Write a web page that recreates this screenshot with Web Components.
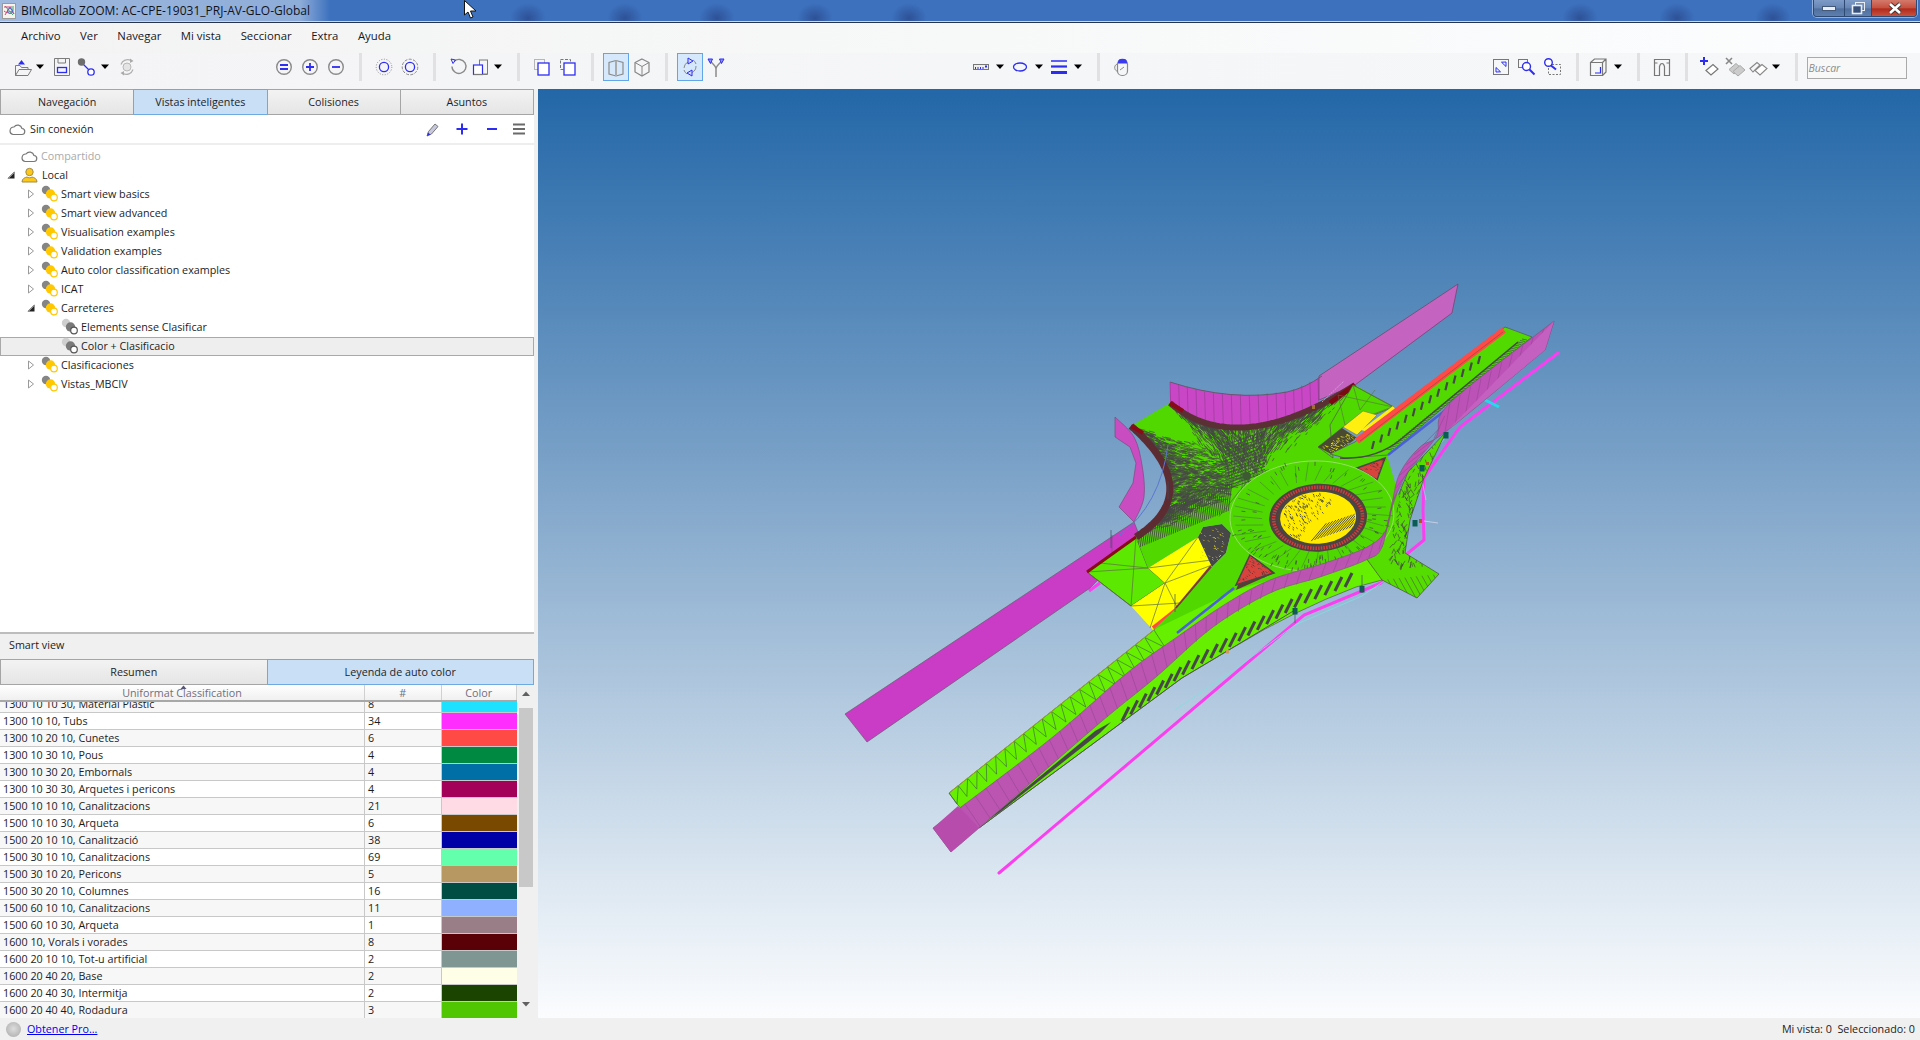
<!DOCTYPE html>
<html lang="es"><head><meta charset="utf-8"><title>BIMcollab ZOOM</title>
<style>
html,body{margin:0;padding:0;height:100%;overflow:hidden;background:#f0f0f0}
body{font:10.75px/1.2 "Open Sans","Liberation Sans",sans-serif;color:#1c1c1c}
</style></head>
<body>
<bim-app>
  <bim-title slot="title">BIMcollab ZOOM: AC-CPE-19031_PRJ-AV-GLO-Global</bim-title>
  <bim-menu slot="menu"><span>Archivo</span><span>Ver</span><span>Navegar</span><span>Mi vista</span><span>Seccionar</span><span>Extra</span><span>Ayuda</span></bim-menu>
  <bim-toolbar slot="toolbar"></bim-toolbar>
  <bim-panel slot="panel">
    <bim-tabs slot="tabs" style="height:26px"><bim-tab>Navegación</bim-tab><bim-tab active>Vistas inteligentes</bim-tab><bim-tab>Colisiones</bim-tab><bim-tab>Asuntos</bim-tab></bim-tabs>
    <bim-conn slot="conn">Sin conexión</bim-conn>
    <bim-tree slot="tree">
      <tree-item level="0" kind="cloud" muted>Compartido</tree-item>
      <tree-item level="0" kind="person" state="open">Local</tree-item>
      <tree-item level="1" kind="group" state="closed">Smart view basics</tree-item>
      <tree-item level="1" kind="group" state="closed">Smart view advanced</tree-item>
      <tree-item level="1" kind="group" state="closed">Visualisation examples</tree-item>
      <tree-item level="1" kind="group" state="closed">Validation examples</tree-item>
      <tree-item level="1" kind="group" state="closed">Auto color classification examples</tree-item>
      <tree-item level="1" kind="group" state="closed">ICAT</tree-item>
      <tree-item level="1" kind="group" state="open">Carreteres</tree-item>
      <tree-item level="2" kind="view">Elements sense Clasificar</tree-item>
      <tree-item level="2" kind="view" selected>Color + Clasificacio</tree-item>
      <tree-item level="1" kind="group" state="closed">Clasificaciones</tree-item>
      <tree-item level="1" kind="group" state="closed">Vistas_MBCIV</tree-item>
    </bim-tree>
    <bim-heading slot="heading">Smart view</bim-heading>
    <bim-tabs slot="subtabs" style="height:26px"><bim-tab>Resumen</bim-tab><bim-tab active>Leyenda de auto color</bim-tab></bim-tabs>
    <bim-legend slot="legend"></bim-legend>
  </bim-panel>
  <bim-model slot="model"></bim-model>
  <bim-status slot="status"></bim-status>
</bim-app>
<script>
const def=(name,css,html)=>{customElements.define(name,class extends HTMLElement{
  constructor(){super();const r=this.attachShadow({mode:'open'});r.innerHTML=`<style>${css}</style>${typeof html==='function'?html(this):html}`;}
});};
const B='#2d2df2',G='#7b7b7b';
const svg=(w,h,b)=>`<svg width="${w}" height="${h}" viewBox="0 0 ${w} ${h}" fill="none" style="display:block;overflow:visible">${b}</svg>`;

def('bim-app',`:host{display:grid;grid-template-columns:534px 4px 1fr;grid-template-rows:23px 30px 36px 1fr 22px;height:1040px;width:1920px;background:#f0f0f0}
.t{grid-column:1/4}.p{grid-column:1;grid-row:4;min-height:0}.m{grid-column:3;grid-row:4;min-height:0;display:grid}.s{grid-column:1/4}`,
`<div class="t"><slot name="title"></slot></div><div class="t"><slot name="menu"></slot></div><div class="t"><slot name="toolbar"></slot></div>
<div class="p"><slot name="panel"></slot></div><div class="m"><slot name="model"></slot></div><div class="s"><slot name="status"></slot></div>`);

const blobs=[528,625,717,815,909,1580,1677,1773].map(x=>`radial-gradient(ellipse 18px 15px at ${x}px 18px,rgba(35,60,125,.6),rgba(35,60,125,0))`).join(',');
def('bim-title',`:host{display:block;height:23px;box-sizing:border-box;position:relative;border-bottom:1px solid #26344e;
background:${blobs},linear-gradient(90deg,rgba(255,255,255,.5) 0,rgba(255,255,255,.42) 300px,rgba(255,255,255,0) 330px),linear-gradient(#3d71bd,#3d71bf)}
:host::after{content:"";position:absolute;left:0;right:0;bottom:0;height:1px;background:#c9d8ec}
.row{display:flex;align-items:center;height:22px;padding-left:2px;gap:5px;font-size:12px;color:#10131a}
.ctl{position:absolute;right:3px;top:0;width:104px;height:17px;display:grid;grid-template-columns:30px 27px 47px;border:1px solid #2e4a73;border-top:0;border-radius:0 0 4px 4px;box-sizing:border-box;overflow:hidden;box-shadow:0 0 0 1px rgba(255,255,255,.45)}
.ctl div{display:flex;align-items:center;justify-content:center;background:linear-gradient(#7e9bc7 0,#6785b4 50%,#4f6f9f 55%,#5f7fae)}
.ctl div+div{border-left:1px solid #2e4a73}
.ctl .x{background:linear-gradient(#d47a6b 0,#c64f3e 50%,#b02a1c 55%,#c9523f)}
.cur{position:absolute;left:464px;top:0}`,
`<div class="row">${svg(14,16,`<rect x=".5" y=".5" width="13" height="15" fill="#f6f2ec" stroke="#9a9a9a"/><path d="M2 4h8M3 12l5-8 4 7M2 8c4 4 7-3 10 3" stroke="#d4437a"/><path d="M3 3l8 9M11 3v6" stroke="#39a36b"/><circle cx="8" cy="8" r="2.5" stroke="#3f6fd0"/>`)}<span><slot></slot></span></div>
<div class="ctl"><div>${svg(14,5,`<rect x=".5" y=".5" width="13" height="4" fill="#e8edf4" stroke="#44587a"/>`)}</div><div>${svg(13,12,`<rect x="3.5" y=".5" width="9" height="8" fill="none" stroke="#e8edf4"/><rect x=".5" y="3.5" width="9" height="8" fill="#38517a" stroke="#e8edf4" stroke-width="1.6"/>`)}</div><div class="x">${svg(14,11,`<path d="M2 1l10 9M12 1L2 10" stroke="#3b3b3b" stroke-width="4.4"/><path d="M2 1l10 9M12 1L2 10" stroke="#fff" stroke-width="2.6"/>`)}</div></div>
<div class="cur">${svg(13,19,`<path d="M.5 .5V15L4 12l2.5 6 2.5-1-2.5-6H12Z" fill="#fff" stroke="#111"/>`)}</div>`);

def('bim-menu',`:host{display:flex;gap:19.5px;align-items:center;height:30px;padding:0 0 4px 21px;box-sizing:border-box;background:linear-gradient(90deg,#f3f3f3,#f7f8f8 50%,#fcfdfe);font-size:11.35px}
::slotted(span){color:#17171c}`,`<slot></slot>`);

const dd=`<path d="M2 9.5h8L6 14Z" fill="#000"/>`;
const ICONS={
open:`<path d="M10.5 5l3.5 4.5H7Z" fill="${B}"/><path d="M4.5 20.5V10.5H9l1.5 2h6.5v2M4.5 20.5L8 14.5h12.5l-3.5 6Z" stroke="${G}"/>`,
save:`<path d="M4.5 3.5h15v17h-15Z" stroke="${G}"/><path d="M8 3.5V8h7.5V3.5" stroke="${G}"/><rect x="7.5" y="12.5" width="9" height="5" stroke="${B}" stroke-width="1.3"/>`,
conn:`<path d="M8 8l9 9" stroke="${B}" stroke-width="1.3"/><circle cx="7.5" cy="7" r="3.7" fill="#6d6d6d"/><circle cx="17" cy="17" r="3.2" fill="#fff" stroke="${B}" stroke-width="1.3"/>`,
sync:`<circle cx="12" cy="12" r="4" fill="#e4e4e4" stroke="#b8b8b8"/><path d="M6 9.5a7 7 0 0 1 10-4M18 14.500a7 7 0 0 1-10 4" stroke="#b0b0b0" stroke-width="1.2"/><path d="M15 3.500l3.500 2.500-3.500 2ZM9 20.500l-3.500-2.500 3.500-2Z" fill="#aaa"/>`,
eq:`<circle cx="12" cy="12" r="7.3" stroke="#8a8a8a" stroke-width="1.4"/><path d="M8 10h8M8 14h8" stroke="${B}" stroke-width="1.8"/>`,
plus:`<circle cx="12" cy="12" r="7.3" stroke="#8a8a8a" stroke-width="1.4"/><path d="M8 12h8M12 8v8" stroke="${B}" stroke-width="1.8"/>`,
minus:`<circle cx="12" cy="12" r="7.3" stroke="#8a8a8a" stroke-width="1.4"/><path d="M8 12h8" stroke="${B}" stroke-width="1.8"/>`,
d1:`<circle cx="12" cy="12" r="7.8" stroke="#888" stroke-dasharray="1 1.6"/><circle cx="12" cy="12" r="4.6" stroke="${B}" stroke-width="1.3"/>`,
d2:`<circle cx="12" cy="12" r="7.8" stroke="#888" stroke-dasharray="3 1.4"/><circle cx="12" cy="12" r="4.6" stroke="${B}" stroke-width="1.3"/>`,
undo:`<path d="M8 6.500a7 7 0 1 1-2 5" stroke="#8a8a8a" stroke-width="1.4"/><path d="M5 4l4.500 1-2.500 3.500Z" fill="none" stroke="${B}"/>`,
boxes:`<rect x="10.500" y="5" width="8" height="14" stroke="${G}"/><rect x="4.500" y="10" width="9" height="9.500" fill="#fff" stroke="${B}" stroke-width="1.2"/><path d="M4.500 19.500h14" stroke="${G}"/>`,
sel1:`<rect x="4.500" y="4.500" width="10" height="10" stroke="#777" stroke-dasharray="1 1"/><rect x="8" y="8" width="11" height="12" fill="#fff" stroke="${B}" stroke-width="1.3"/>`,
sel2:`<rect x="4.500" y="4.500" width="10" height="10" stroke="#777" stroke-dasharray="3 1.500"/><rect x="8" y="8" width="11" height="12" fill="#fff" stroke="${B}" stroke-width="1.3"/>`,
book:`<path d="M12 5.500L5 7.500v11.500l7 2 7-2V7.500Z" stroke="#8a8a8a" stroke-width="1.200"/><path d="M12 5.500v15.500" stroke="#aaa" stroke-width="2"/>`,
cube:`<path d="M12 4l7 3.500v9.500l-7 4-7-4V7.500Z" stroke="#858585" stroke-width="1.200"/><path d="M5 7.500l7 4 7-4M12 11.500V21" stroke="#858585"/>`,
orbit:`<path d="M6 13a7 7 0 0 1 4-6M18 11a7 7 0 0 1-4 6.500M6 15a7 7 0 0 0 3 4M15 5a7 7 0 0 1 3 4" stroke="#8a8a8a"/><path d="M10 3l5 3-5 3Z" fill="#cfd8ff" stroke="${B}"/><path d="M14 15l-5 3 5 3Z" fill="#cfd8ff" stroke="${B}"/>`,
walk:`<path d="M12 22V14c0-3-3-5-6-8M12 14c0-3 3-5 6-8" stroke="#8a8a8a" stroke-width="1.500"/><path d="M4 4h4.500l-2 4.500ZM20 4h-4.500l2 4.500Z" fill="#8f8fff" stroke="${B}"/>`,
ruler:`<rect x="4.500" y="9.500" width="15" height="5" fill="#eee" stroke="#777"/><path d="M6.500 14v-2M9 14v-2M11.500 14v-2M14 14v-2" stroke="${B}"/><rect x="16" y="10.500" width="2" height="2" fill="${B}"/>`,
ell:`<ellipse cx="12" cy="12" rx="6.500" ry="4" stroke="${B}" stroke-width="1.300"/>`,
lines:`<path d="M4 6h16" stroke="${B}" stroke-width="1.500"/><path d="M4 11.500h16" stroke="${B}" stroke-width="2.200"/><path d="M4 17.500h16" stroke="${B}" stroke-width="3"/>`,
mouse:`<rect x="7.500" y="4.500" width="10" height="16" rx="4.500" stroke="#8a8a8a" stroke-width="1.200"/><path d="M8 8.500V7a4 3 0 0 1 9 0v1.500Z" fill="#3a3af0"/><path d="M7 9c-4 2-2 7 0 7M10 15l4-3" stroke="#8a8a8a"/>`,
fit:`<rect x="4.500" y="4.500" width="15" height="15" stroke="#777"/><path d="M7 17l4.500-.2L7 12.500ZM17 7l-4.500 .2L17 11.500Z" stroke="${B}"/>`,
zw:`<rect x="3.500" y="4.500" width="9" height="8" stroke="#777"/><circle cx="11.500" cy="11.500" r="4" fill="#fff" stroke="${B}" stroke-width="1.400"/><path d="M14.500 14.500l5 5" stroke="${B}" stroke-width="2"/>`,
zs:`<rect x="8.500" y="9.500" width="12" height="10" stroke="#777" stroke-dasharray="2 1.500"/><circle cx="8.500" cy="7.500" r="3.800" fill="#fff" stroke="${B}" stroke-width="1.400"/><path d="M11 10.500l5 4" stroke="${B}" stroke-width="2"/>`,
cam:`<path d="M4.500 7.500h12v13h-12ZM4.500 7.500l4-3.500h11.500v13l-3.500 3.500M16.500 7.500l3.500-3.500" stroke="#777" stroke-width="1.200"/><path d="M9 18h5.500v-6" stroke="${B}" stroke-width="1.200"/>`,
sec:`<path d="M4.500 4.500h15v16h-5v-9c-1-4-4-4-5 0v9h-5Z" stroke="#777" stroke-width="1.200"/><path d="M4.500 8h3M19.500 8h-3" stroke="#777"/>`,
tagp:`<path d="M2 6h8M6 2v8" stroke="${B}" stroke-width="2"/><path d="M8 15.500l7-6 5 4.500-7 6Z" fill="#fff" stroke="#777" stroke-width="1.200"/>`,
tagx:`<path d="M2 3l6 6M8 3L2 9" stroke="#888" stroke-width="1.600"/><path d="M5 14.500l7-6 5 4.500-7 6Z" fill="#ccc" stroke="#aaa"/><path d="M9 16.500l7-6 5 4.500-7 6Z" fill="#ccc" stroke="#aaa"/>`,
tags:`<path d="M3 13.500l7-6 3 2.500-7 7Z" stroke="#888" stroke-width="1.100"/><path d="M8 15.500l7-6 5 4-7 6.500Z" fill="#fff" stroke="#888" stroke-width="1.100"/>`};
const TOOLS=[['open',23],['dd',40,12],['save',62],['conn',86],['dd',105,12],['sync',127],['eq',284],['plus',310],['minus',336],['sep',360],['d1',384],['d2',410],['sep',434],['undo',458],['boxes',481],['dd',498,12],['sep',518],['sel1',542],['sel2',568],['sep',592],['book',616,26,1],['cube',642],['sep',666],['orbit',690,26,1],['walk',716],['ruler',981],['dd',1000,12],['ell',1020],['dd',1039,12],['lines',1059],['dd',1078,12],['sep',1098],['mouse',1122],['fit',1501],['zw',1527],['zs',1552],['sep',1577],['cam',1598],['dd',1618,12],['sep',1638],['sec',1662],['sep',1686],['tagp',1710],['tagx',1736],['tags',1759],['dd',1776,12],['sep',1796]];
def('bim-toolbar',`:host{display:flex;align-items:flex-start;height:36px;box-sizing:border-box;background:linear-gradient(90deg,#f4f4f6,#f5f6f8 50%,#f6f7f9)}
.i{flex:none;height:28px;display:flex;align-items:center;justify-content:center;box-sizing:border-box}
.on{background:#d6e8fb;border:1px solid #62a5e8}
.sep{width:3px;background:#e1e1e3}
.q{flex:none;margin-left:9px;margin-top:4px;width:100px;height:22px;box-sizing:border-box;border:1px solid #aaa;background:#f8f8f8;font:italic 10.5px/20px "Open Sans",sans-serif;color:#8c8c8c;padding-left:1px}`,
t=>{let end=0,h='';for(const[k,c,w0,on]of TOOLS){const w=k==='sep'?3:(w0||24);const ml=c-w/2-end;end=c+w/2;
 if(k==='sep')h+=`<div class="i sep" style="margin-left:${ml}px"></div>`;
 else if(k==='dd')h+=`<div class="i" style="margin-left:${ml}px;width:12px">${svg(12,24,dd)}</div>`;
 else h+=`<div class="i${on?' on':''}" style="margin-left:${ml}px;width:${w}px">${svg(24,24,ICONS[k])}</div>`;}
 return h+`<div class="q">Buscar</div>`;});

def('bim-panel',`:host{display:flex;flex-direction:column;height:100%;background:#fff;overflow:hidden}
.tree{flex:1;min-height:0;display:block;border-bottom:2px solid #bdbdbd}`,
`<slot name="tabs"></slot><slot name="conn"></slot><div class="tree"><slot name="tree"></slot></div><slot name="heading"></slot><slot name="subtabs"></slot><slot name="legend"></slot>`);

def('bim-tabs',`:host{display:flex;box-sizing:border-box}`,`<slot></slot>`);
def('bim-tab',`:host{flex:1 1 0;display:flex;align-items:center;justify-content:center;box-sizing:border-box;border:1px solid #a5a5a5;margin-left:-1px;background:linear-gradient(#f3f3f3,#e5e5e5);color:#1e1e28}
:host(:first-child){margin-left:0}
:host([active]){background:#c8dff6;border-color:#6fa9e2;z-index:1;position:relative}`,`<slot></slot>`);

def('bim-conn',`:host{display:flex;align-items:center;height:30px;box-sizing:border-box;border-bottom:2px solid #eee;padding-left:9px;background:#fff}
.t{margin-left:5px;flex:1}
.a{display:flex;align-items:center;margin-right:9.5px}.a>*{margin-left:6px}.a>:last-child{margin-left:7.5px}`,
`${svg(16,12,`<path d="M4 11.500h8.500a3 3 0 0 0 .5-6 4.500 4.500 0 0 0-8-1.500 3.800 3.800 0 0 0-1 7.500Z" stroke="#777" stroke-width="1.200"/>`)}<span class="t"><slot></slot></span>
<span class="a">${svg(24,18,`<path d="M7 16l1.500-4.500 6.500-7.500 3 2.500-6.500 7.500Z" fill="#c8c8dc" stroke="#777"/><path d="M7 16l1-3.500 2.500 2Z" fill="${B}"/>`)}${svg(24,18,`<path d="M12 3.500v11M6.500 9h11" stroke="${B}" stroke-width="2"/>`)}${svg(24,18,`<path d="M7 9h10" stroke="${B}" stroke-width="2"/>`)}${svg(13,18,`<path d="M1 4.500h12M1 9h12M1 13.500h12" stroke="#6a6a6a" stroke-width="2"/>`)}</span>`);

def('bim-tree',`:host{display:block;padding-top:2px}`,`<slot></slot>`);
const balls=(a,b,cs)=>`<circle cx="5" cy="5" r="4.200" fill="${a}"/><circle cx="9.500" cy="9" r="4.700" fill="${b}"/><circle cx="13" cy="12.500" r="3.300" fill="#fff" stroke="${cs}" stroke-width="1.200"/>`;
const KINDS={cloud:svg(16,12,`<path d="M4 11.500h8.500a3 3 0 0 0 .5-6 4.500 4.500 0 0 0-8-1.500 3.800 3.800 0 0 0-1 7.500Z" stroke="#777" stroke-width="1.200"/>`),
person:svg(17,16,`<circle cx="8.500" cy="5" r="3.700" fill="#fdc818" stroke="#a38b45"/><path d="M1 15c0-3.500 3-4.500 5-5 1 1 4 1 5 0 2 .5 5 1.500 5 5Z" fill="#fdc818" stroke="#a38b45"/>`),
group:svg(17,17,balls('#858585','#ffc800','#ffc800')),view:svg(17,17,balls('#cfcfcf','#7a7a7a','#555'))};
def('tree-item',`:host{display:flex;align-items:center;height:19px;box-sizing:border-box;position:relative;color:#1c1c24}
:host([selected]){background:#eee;box-shadow:inset 0 0 0 1px #a9a9a9}
:host([muted]){color:#aaa}
.ar{position:absolute;top:4px;width:10px;height:10px}
.ic{position:absolute;top:0}
.tx{position:absolute;top:0;height:19px;display:flex;align-items:center;white-space:nowrap}`,
t=>{const l=+t.getAttribute('level'),k=t.getAttribute('kind'),s=t.getAttribute('state');const ax=[6,26,0][l],ix=[21,41,61][l],tx=[42,61,81][l]-(k==='cloud'?1:0);
 const ar=s==='open'?`<path d="M8.500 1.500v7H1.500Z" fill="#222"/><path d="M8 3l-5 5" stroke="#888"/>`:s==='closed'?`<path d="M2.500 1l5 4-5 4Z" fill="#fff" stroke="#9a9a9a"/>`:'';
 return `${ar?`<span class="ar" style="left:${ax}px">${svg(10,10,ar)}</span>`:''}<span class="ic" style="left:${ix}px;top:${k==='cloud'?3:k==='person'?1:0}px">${KINDS[k]}</span><span class="tx" style="left:${tx}px"><slot></slot></span>`;});

def('bim-heading',`:host{display:flex;align-items:center;height:25px;box-sizing:border-box;padding:0 0 2px 9px;background:#f0f0f0;color:#1c1c1c}`,`<slot></slot>`);

const DATA=[['1300 10 10 30, Material Plastic',8,'#1de1ff'],['1300 10 10, Tubs',34,'#ff2eff'],['1300 10 20 10, Cunetes',6,'#ff4a46'],['1300 10 30 10, Pous',4,'#008941'],['1300 10 30 20, Embornals',4,'#006fa6'],['1300 10 30 30, Arquetes i pericons',4,'#a30059'],['1500 10 10 10, Canalitzacions',21,'#ffdbe5'],['1500 10 10 30, Arqueta',6,'#7a4900'],['1500 20 10 10, Canalització',38,'#0000a6'],['1500 30 10 10, Canalitzacions',69,'#63ffac'],['1500 30 10 20, Pericons',5,'#b79762'],['1500 30 20 10, Columnes',16,'#004d43'],['1500 60 10 10, Canalitzacions',11,'#8fb0ff'],['1500 60 10 30, Arqueta',1,'#997d87'],['1600 10, Vorals i vorades',8,'#5a0007'],['1600 20 10 10, Tot-u artificial',2,'#809693'],['1600 20 40 20, Base',2,'#feffe6'],['1600 20 40 30, Intermitja',2,'#1b4400'],['1600 20 40 40, Rodadura',3,'#4fc601']];
def('bim-legend',`:host{flex:none;display:grid;grid-template-columns:517px 17px;grid-template-rows:17px 316px;background:#f0f0f0;color:#1c1c1c}
.h,.r{display:grid;grid-template-columns:365px 76.500px 75.500px;box-sizing:border-box}
.h{height:17px;background:linear-gradient(#fff,#f0f0f0);border-bottom:2px solid #a8a8a8;color:#6f6f80;position:relative}
.h div{display:flex;align-items:center;justify-content:center;border-right:1px solid #d0d0d0;line-height:14px}
.sort{position:absolute;left:180px;top:0}
.b{overflow:hidden;height:316px;background:#fff;padding-left:1px;box-sizing:border-box;width:517px}
.in{margin-top:-6px}
.r{height:17px;margin-left:-1px;border-bottom:1px solid #c8c8c8;background:#fff}
.r:nth-child(odd){background:#f7f7f7}
.r div{display:flex;align-items:center;border-right:1px solid #c8c8c8;padding-left:3px;white-space:nowrap}
.r div:last-child{border-right:0;padding:0}
.sb{grid-row:1/3;grid-column:2;display:grid;grid-template-rows:23px 179px 1fr 16px;justify-items:center;background:#f0f0f0}
.th{width:14px;background:#c8c8c8}`,
`<div class="h"><div>Uniformat Classification</div><div>#</div><div>Color</div><span class="sort">${svg(7,4,`<path d="M.5 4L3.500 .5 6.500 4Z" fill="#557"/>`)}</span></div>
<div class="sb"><div style="padding-top:6px">${svg(8,5,`<path d="M0 5l4-4.500L8 5Z" fill="#606060"/>`)}</div><div class="th"></div><div></div><div>${svg(8,5,`<path d="M0 0l4 4.500L8 0Z" fill="#606060"/>`)}</div></div>
<div class="b"><div class="in">${DATA.map(d=>`<div class="r"><div>${d[0]}</div><div>${d[1]}</div><div style="background:${d[2]}"></div></div>`).join('')}</div></div>`);

def('bim-status',`:host{display:flex;align-items:center;height:22px;background:#f0f0f0;padding-left:6px;padding-right:5px;color:#1c1c1c}
.ball{width:15px;height:15px;border-radius:50%;background:radial-gradient(circle at 50% 45%,#ddd,#a8a8a8)}
a{margin-left:6px;color:#0000ee;text-decoration:underline}
.r{margin-left:auto;white-space:pre}`,
`<span class="ball"></span><a>Obtener Pro...</a><span class="r">Mi vista: 0  Seleccionado: 0</span>`);

/* ---------- model ---------- */
function buildModel(){
 let seed=7;const R=()=>{seed=(seed*16807)%2147483647;return seed/2147483647;};
 const smooth=pts=>{let d=`M${pts[0]}`;for(let i=0;i<pts.length-1;i++){const p0=pts[i-1]||pts[i],p1=pts[i],p2=pts[i+1],p3=pts[i+2]||p2;
   d+=`C${(p1[0]+(p2[0]-p0[0])/6).toFixed(1)} ${(p1[1]+(p2[1]-p0[1])/6).toFixed(1)} ${(p2[0]-(p3[0]-p1[0])/6).toFixed(1)} ${(p2[1]-(p3[1]-p1[1])/6).toFixed(1)} ${p2}`;}return d;};
 const sample=(pts,n)=>{const seg=[];let L=0;for(let i=0;i<pts.length-1;i++){const l=Math.hypot(pts[i+1][0]-pts[i][0],pts[i+1][1]-pts[i][1]);seg.push(l);L+=l;}
   const o=[];for(let k=0;k<=n;k++){let d=L*k/n,i=0;while(i<seg.length-1&&d>seg[i]){d-=seg[i];i++;}const t=d/seg[i];o.push([pts[i][0]+(pts[i+1][0]-pts[i][0])*t,pts[i][1]+(pts[i+1][1]-pts[i][1])*t]);}return o;};
 const lines=(arr,col,w,op)=>`<path d="${arr.map(l=>`M${l[0].toFixed(1)} ${l[1].toFixed(1)}L${l[2].toFixed(1)} ${l[3].toFixed(1)}`).join('')}" stroke="${col}" stroke-width="${w}" ${op?`opacity="${op}"`:''} fill="none"/>`;
 const Qp=(a,c,b,n)=>{const o=[];for(let i=0;i<=n;i++){const t=i/n;o.push([(1-t)*(1-t)*a[0]+2*t*(1-t)*c[0]+t*t*b[0],(1-t)*(1-t)*a[1]+2*t*(1-t)*c[1]+t*t*b[1]]);}return o;};
 const DK='#474747';
 let s='';
 const wU=[[933,828],[1049,740],[1127,673],[1177,637],[1227,603],[1270,580],[1325,563],[1367,547],[1386,530],[1394,500],[1408,472],[1436,437],[1450,403],[1554,321]];
 const wL=[[951,852],[979,828],[1095,727],[1156,677],[1213,627],[1270,593],[1320,577],[1366,560],[1382,547],[1392,503],[1400,473],[1420,447],[1448,430],[1545,350]];
 const leftArc=Qp([1136,537],[1206,492],[1131,426],90), topArc=Qp([1170,403],[1237,460],[1355,385],110);
 /* background lines */
 s+=`<polyline points="999,873 1304,615 1381,583 1408,553" stroke="#fb3ff0" stroke-width="3" stroke-linecap="round" fill="none"/>`;
 s+=`<polyline points="1558,353 1460,427 1424,478 1423,510 1424,540 1408,553" stroke="#fb3ff0" stroke-width="3" stroke-linecap="round" fill="none"/>`;
 s+=`<line x1="1089" y1="591" x2="1100" y2="583" stroke="#fb3ff0" stroke-width="3"/>`;
 s+=`<line x1="1483" y1="399" x2="1499" y2="407" stroke="#25d8ee" stroke-width="3"/>`;
 s+=`<path d="M1175 710L1234 670 1295 625 1362 596 1408 565M1426 500L1420 470 1448 434" stroke="#7fe0e0" stroke-width=".8" fill="none"/>`;
 /* top wall */
 s+=`<path d="M1170 382 Q1232 402 1287 392 Q1305 388 1322 376 L1458 284 L1452 313 L1355 385 L1319 400 Q1300 425 1250 427 Q1200 425 1170 403Z" fill="#c946c6"/>`;
 s+=`<path d="M1319 376L1458 284 1452 313 1355 385 1319 400Z" fill="#c563c1" stroke="#6c4a70" stroke-width=".8"/>`;
 s+=`<path d="M1170 382Q1232 402 1287 392Q1305 388 1322 376" stroke="#555" stroke-width=".8" fill="none"/>`;
 s+=lines(sample([[1170,382],[1210,393],[1250,395],[1290,391],[1318,378]],17).map(p=>[p[0],p[1],p[0]+1,p[1]+35]),'#8d3d8d',.6);
 /* left fragment */
 s+=`<path d="${smooth([[1115,417],[1134,437],[1142,465],[1144,497],[1134,522]])}L1119 507L1133 483L1136 463L1130 447L1115 437Z" fill="#c94cc1" stroke="#7d4a80" stroke-width=".7"/>`;
 /* long left wall */
 s+=`<polygon points="845,714 1134,522 1140,537 1090,588 867,742" fill="#cb3cc6" stroke="#5f5f6a" stroke-width=".7"/>`;
 s+=`<line x1="1112" y1="535" x2="1112" y2="566" stroke="#8b3a90" stroke-width=".7"/>`;
 s+=`<defs><clipPath id="plz"><path d="M1131 426L1170 403Q1237 460 1355 385L1394 407L1343 427L1318 447L1333 458L1387 455L1400 500L1382 547L1320 577L1270 580L1236 590L1153 630L1177 608L1212 567L1226 553L1231 533L1222 524L1203 527L1198 537L1148 568L1136 537Q1206 492 1131 426Z"/></clipPath>
 <clipPath id="est"><path d="M1392 510L1408 472L1446 432L1424 478L1410 520L1405 553L1439 574L1417 598L1382 580L1366 558L1382 547Z"/></clipPath></defs>`;
 /* SW road */
 s+=`<path d="M949 793L1154 630L1177 608L1260 580L1370 540L1382 580L1356 587Q1295 610 1234 647L1182 678L979 828L957 804Z" fill="#66f000" stroke="#555" stroke-width=".7"/>`;
 const a=sample([[949,793],[1154,630]],22),b=sample([[957,804],[1175,640]],22);let zz=[];
 for(let i=0;i<22;i++){zz.push([a[i][0],a[i][1],b[i][0],b[i][1]],[b[i][0],b[i][1],a[i+1][0],a[i+1][1]]);}
 s+=lines(zz,'#3f6f3f',.7);
 s+=`<line x1="949" y1="793" x2="1154" y2="630" stroke="#97a020" stroke-width="1"/>`;
 /* bottom hatch */
 const h1=sample([[1122,721],[1182,675],[1234,644],[1295,607],[1345,587]],24);
 s+=lines(h1.map(p=>[p[0],p[1],p[0]+7,p[1]-14]),'#474747',3);
 s+=`<path d="M985 822L1095 731 1111 722 1100 733 1000 812Z" fill="#474747"/>`;
 s+=`<path d="M979 828L1182 678Q1234 647 1295 610" stroke="#555" stroke-width="1" fill="none"/>`;
 /* east */
 s+=`<path d="M1392 510L1408 472L1446 432L1424 478L1410 520L1405 553L1439 574L1417 598L1382 580L1366 558L1382 547Z" fill="#55dc00" stroke="#4a4a4a" stroke-width=".7"/>`;
 {let l=[];for(let i=0;i<300;i++){const y=440+R()*125,x=1392+R()*45;l.push([x,y,x+4-R()*8,y+6-R()*3]);}
  s+=`<g clip-path="url(#est)">${lines(l,DK,.7)}${lines(sample([[1382,580],[1439,574]],10).map(p=>[p[0],p[1],p[0]+12,p[1]+22]),'#444',.5)}</g>`;}
 /* SW light green + yellow */
 s+=`<polygon points="1087,572 1136,537 1148,568 1165,583 1131,606" fill="#5ce800" stroke="#444" stroke-width=".7"/>`;
 s+=`<polygon points="1148,568 1198,537 1212,567 1177,608 1153,630 1131,606 1165,583" fill="#ffff00"/>`;
 s+=lines([[1087,572,1148,568],[1087,572,1131,606],[1100,563,1148,568],[1136,537,1131,606],[1148,568,1212,560],[1165,583,1212,565],[1165,583,1177,607],[1131,606,1180,603],[1198,537,1165,583],[1165,583,1150,628]],'#5d6f45',.7);
 s+=`<polygon points="1198,537 1203,527 1222,524 1231,533 1226,553 1212,567" fill="#474747"/>`;
 {let l=[];for(let i=0;i<45;i++){const x=1200+R()*25,y=528+R()*34;l.push([x,y,x+1,y+1]);}s+=lines(l,'#d8c820',1);}
 s+=`<line x1="1087" y1="572" x2="1136" y2="537" stroke="#8a0a18" stroke-width="3"/>`;
 s+=`<line x1="1153" y1="628" x2="1177" y2="609" stroke="#ff4a46" stroke-width="4"/>`;
 s+=`<path d="M1177 609L1212 567" stroke="#7a3a3a" stroke-width="5"/>`;
 /* plaza */
 s+=`<g clip-path="url(#plz)"><rect x="1120" y="380" width="300" height="260" fill="#50d800"/>`;
 {const cen=[1247,476];const short=[];
  const band=(arc,n,rmax)=>{for(let i=0;i<n;i++){const p=arc[Math.floor(R()*arc.length)],dx=cen[0]-p[0]+(R()-.5)*40,dy=cen[1]-p[1]+(R()-.5)*40,L=Math.hypot(dx,dy),r=Math.pow(R(),1.5)*rmax,len=3+R()*5;
    const x=p[0]+dx/L*r,y=p[1]+dy/L*r;short.push([x,y,x+dx/L*len,y+dy/L*len]);}};
  band(leftArc,1500,62);band(topArc,1500,50);
  const sw=[];for(let i=0;i<42;i++){const x=1138+i*2.200,y=548-i*.9;sw.push([x,y,x+4,y-30]);}
  const fan=[];for(let i=0;i<26;i++){const x=1160+R()*110,y=425+R()*95;fan.push([x,y,cen[0]+(R()-.5)*6,cen[1]+(R()-.5)*6]);}
  const cross=[];for(let i=0;i<15;i++){const y=445+i*3.200;cross.push([1225,y,1265,y-14]);}
  s+=lines(short,DK,.7)+lines(sw,DK,.9)+lines(fan,'#3e6a34',.6)+lines(cross,DK,.9);
  s+=`<circle cx="1247" cy="476" r="4" fill="#3e5a34"/>`;
  s+=`<polygon points="1236,590 1250,555 1274,573" fill="#5a3c34"/>`;
 }
 s+=`</g>`;
 /* arcs */
 s+=`<path d="M${leftArc.map(p=>p.map(v=>v.toFixed(1))).join('L')}" stroke="#5d2c33" stroke-width="7" fill="none"/>`;
 s+=`<path d="M${topArc.map(p=>p.map(v=>v.toFixed(1))).join('L')}" stroke="#5b3034" stroke-width="6" fill="none"/>`;
 s+=`<line x1="1131" y1="426" x2="1143" y2="433" stroke="#8a0a18" stroke-width="4"/><line x1="1170" y1="403" x2="1183" y2="411" stroke="#8a0a18" stroke-width="4"/>`;
 s+=`<line x1="1330" y1="403" x2="1355" y2="385" stroke="#7d0a12" stroke-width="5"/>`;
 s+=`<line x1="1322" y1="402" x2="1344" y2="381" stroke="#e2a6e8" stroke-width=".8" stroke-dasharray="2 1"/>`;
 /* NE plaza */
 s+=`<polygon points="1353,385 1394,407 1343,427 1318,447 1333,458 1330,425" fill="#4fd900" stroke="#555" stroke-width=".7"/>`;
 s+=lines([[1353,385,1360,410],[1353,385,1393,407],[1338,395,1393,407],[1338,395,1345,425],[1360,410,1375,390],[1345,425,1392,407]],'#586f40',.6);
 s+=`<polygon points="1343,427 1363,411 1377,415 1357,435" fill="#ffef10" stroke="#666" stroke-width=".5"/>`;
 s+=`<polygon points="1393,406 1395,409 1365,431 1361,430" fill="#ffef10"/>`;
 s+=`<polygon points="1318,447 1342,428 1357,438 1333,455" fill="#4a4a30"/>`;
 {let l=[];for(let i=0;i<70;i++){const t=R(),u=R();const x=1322+t*24+u*10,y=447-t*15+u*6;l.push([x,y,x+1,y+1]);}s+=lines(l,'#e8e020',1);}
 /* NE strip */
 s+=`<polygon points="1355,442 1505,327 1532,337 1452,400 1388,455 1345,458 1330,454" fill="#52da00" stroke="#555" stroke-width=".7"/>`;
 s+=`<line x1="1357" y1="441" x2="1504" y2="330" stroke="#ff4a46" stroke-width="6.500"/><line x1="1360" y1="441" x2="1503" y2="332" stroke="#9a4838" stroke-width=".7"/>`;
 s+=lines(sample([[1372,449],[1478,364]],13).map(p=>[p[0],p[1],p[0]+2,p[1]-8]),'#474747',2.200);
 s+=lines(sample([[1392,450],[1527,340]],72).map(p=>[p[0],p[1],p[0]-5,p[1]-1]),'#40604a',.8);
 s+=`<path d="M1340 458Q1375 460 1400 440L1518 342" stroke="#474747" stroke-width="1.600" fill="none"/>`;
 s+=`<polygon points="1357,468 1385,458 1377,480" fill="#d9433e" stroke="#474747" stroke-width="1.500"/>`;
 s+=`<polygon points="1250,555 1274,573 1236,585" fill="#d9433e" stroke="#474747" stroke-width="1.500"/>`;
 {let l=[];for(let i=0;i<60;i++){const u=R(),v=R()*(1-u);const x=1250+u*24-v*14,y=555+u*18+v*30;l.push([x,y,x+1,y+1]);}s+=lines(l,'#5a3838',1);
  l=[];for(let i=0;i<35;i++){const u=R(),v=R()*(1-u);const x=1357+u*28+v*20,y=468-u*10+v*12;l.push([x,y,x+1,y+1]);}s+=lines(l,'#5a3838',1);}
 s+=`<path d="M1388 455L1452 405" stroke="#4a60d8" stroke-width="2.500"/><path d="M1177 633L1234 588" stroke="#4a60d8" stroke-width="2.500"/><path d="M1120 535Q1160 505 1168 445" stroke="#5b76d0" stroke-width="1" fill="none"/>`;
 /* roundabout */
 s+=`<g transform="rotate(-3 1312 516)"><ellipse cx="1312" cy="516" rx="82" ry="55" fill="#4fd800" stroke="#a6e27a" stroke-width=".8"/>`;
 {let l=[];for(let i=0;i<34;i++){const th=i/34*6.283;l.push([1312+Math.cos(th)*50,516+Math.sin(th)*35,1312+Math.cos(th+.08)*(72+R()*9),516+Math.sin(th+.08)*(48+R()*6)]);}
  let m=[];for(let i=0;i<170;i++){const th=R()*6.283;const r1=.68+R()*.3;const x=1312+Math.cos(th)*82*r1,y=516+Math.sin(th)*55*r1;if(Math.sin(th)>0||R()<.25)m.push([x,y,x+Math.cos(th)*4,y+Math.sin(th)*4]);}
  s+=lines(l,'#46803a',.6)+lines(m,DK,.7);}
 s+=`<ellipse cx="1318" cy="518" rx="49" ry="34" fill="#524040"/><ellipse cx="1318" cy="518" rx="44.500" ry="30.500" fill="none" stroke="#cf3d3d" stroke-width="3.500" stroke-dasharray="1.500 1.200"/><ellipse cx="1318" cy="518" rx="41" ry="28" fill="#474747"/><ellipse cx="1318" cy="518" rx="38" ry="26" fill="#ffea00"/>`;
 s+=`<defs><clipPath id="yl"><ellipse cx="1318" cy="518" rx="37" ry="25"/></clipPath></defs>`;
 {let l=[];for(let i=0;i<230;i++){const x=1281+R()*50,y=493+R()*50;if(x+y<1835)l.push([x,y,x+1.400,y+1.400]);}
  for(let i=0;i<15;i++){const x=1310+i*3.200;l.push([x,541-i*.9,x+16,524-i*.9]);}
  s+=`<g clip-path="url(#yl)">${lines(l,'#474747',.9)}</g>`;}
 s+=`</g>`;
 /* S-wall */
 s+=`<path d="${smooth(wU)}L1545 350${smooth(wL.slice().reverse()).replace(/^M/,'L')}Z" fill="#bf4fb7" fill-opacity=".97" stroke="#6d5a70" stroke-width=".6"/>`;
 const rU=sample(wU,62),rL=sample(wL,62);
 s+=lines(rU.map((p,i)=>[p[0],p[1],rL[i][0],rL[i][1]]),'#8f458c',.55);
 s+=`<polygon points="1448,430 1554,321 1545,350" fill="#c460bf"/>`;
 s+=`<polygon points="933,828 951,852 979,828 958,806" fill="#b74cac"/>`;
 /* fittings */
 for(const[x,y]of[[1295,611],[1362,589],[1415,523],[1422,468],[1446,435]])s+=`<rect x="${x-2.500}" y="${y-3}" width="5" height="6.500" fill="#0b5c55"/>`;
 for(const[x,y]of[[1295,605],[1362,575],[1175,594],[1111,530],[1168,481]])s+=`<line x1="${x}" y1="${y}" x2="${x}" y2="${y+18}" stroke="#37505c" stroke-width=".7"/>`;
 s+=`<rect x="1226" y="650" width="3" height="3.500" fill="#c89a60"/><rect x="1419" y="519" width="3" height="4" fill="#a85a20"/><rect x="1426" y="462" width="3" height="3" fill="#a85a20"/><rect x="1312" y="405" width="3" height="4" fill="#a07030"/>`;
 s+=`<line x1="1424" y1="521" x2="1438" y2="523" stroke="#dde" stroke-width=".7"/>`;
 return `<svg viewBox="538 89 1382 929" width="1382" height="929" style="display:block;position:absolute;left:0;top:0">${s}</svg>`;
}
def('bim-model',`:host{display:block;position:relative;height:100%;overflow:hidden;background:linear-gradient(#2367a8,#7ea4c9 42%,#dce7f1 85%,#fbfcfe)}`,buildModel);
</script>
</body></html>
